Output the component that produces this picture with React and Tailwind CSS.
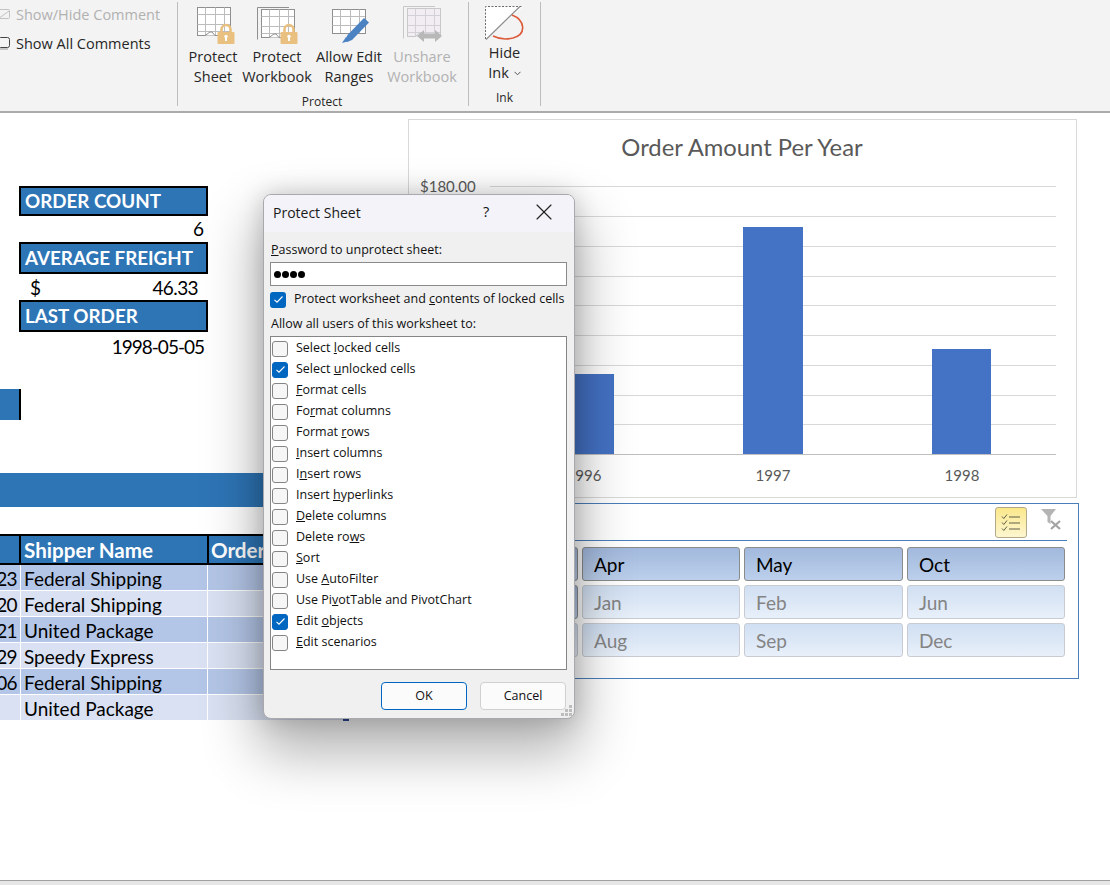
import { X } from 'lucide-react'

const seg = { fontFamily: '"Open Sans", "Noto Sans", sans-serif' }

const options = [
  [['Select ', 'l', 'ocked cells'], false],
  [['Select ', 'u', 'nlocked cells'], true],
  [['', 'F', 'ormat cells'], false],
  [['Fo', 'r', 'mat columns'], false],
  [['Format ', 'r', 'ows'], false],
  [['', 'I', 'nsert columns'], false],
  [['I', 'n', 'sert rows'], false],
  [['Insert ', 'h', 'yperlinks'], false],
  [['', 'D', 'elete columns'], false],
  [['Delete ro', 'w', 's'], false],
  [['', 'S', 'ort'], false],
  [['Use ', 'A', 'utoFilter'], false],
  [['Use Pi', 'v', 'otTable and PivotChart'], false],
  [['Edit ', 'o', 'bjects'], true],
  [['', 'E', 'dit scenarios'], false],
]

const tableRows = [
  ['23', 'Federal Shipping', 'bg-[#b4c6e7]'],
  ['20', 'Federal Shipping', 'bg-[#d9e1f2]'],
  ['21', 'United Package', 'bg-[#b4c6e7]'],
  ['29', 'Speedy Express', 'bg-[#d9e1f2]'],
  ['06', 'Federal Shipping', 'bg-[#b4c6e7]'],
  ['', 'United Package', 'bg-[#d9e1f2]'],
]

const slicerRows = [
  [['', true], ['Apr', true], ['May', true], ['Oct', true]],
  [['', true], ['Jan', false], ['Feb', false], ['Jun', false]],
  [['', false], ['Aug', false], ['Sep', false], ['Dec', false]],
]

const gridY = [186, 216, 246, 276, 305, 335, 365, 395, 424, 454]

function Check({ checked }) {
  return (
    <span
      className={`w-[16px] h-[16px] rounded-[3px] shrink-0 flex items-center justify-center border ${
        checked ? 'bg-[#0067c0] border-[#0067c0]' : 'bg-[#f6f6f6] border-[#858585]'
      }`}
    >
      {checked && (
        <svg width="11" height="9" viewBox="0 0 11 9" fill="none">
          <path d="M1.5 4.8 L4 7.2 L9.5 1.5" stroke="white" strokeWidth="1.1" />
        </svg>
      )}
    </span>
  )
}

function SheetIcon({ x = 0, y = 0, double, faded, short }) {
  const outer = faded ? '#c8c8c8' : '#8f8f8f'
  const inner = faded ? '#d3d0d6' : '#bcbcbc'
  const h = short ? 24 : 28
  return (
    <g transform={`translate(${x} ${y})`} fill="none" strokeWidth="1">
      {double && <path d={`M-3.5 ${h + 2.5} V-1.5 H28`} stroke={outer} />}
      <rect x="0.5" y="0.5" width="33" height={h} fill={faded ? '#f1edf3' : 'white'} stroke={outer} />
      <path d={`M8.5 0.5 V${h} M18.5 0.5 V${h} M27.5 0.5 V${h} M0.5 7.5 H33`} stroke={inner} />
      <path d={short ? 'M0.5 16.5 H33' : 'M0.5 17.5 H33 M0.5 24.5 H33'} stroke={inner} />
      {!short && <path d="M8 28.5 L13 25 H15 L18 28.5" stroke={outer} fill="white" />}
    </g>
  )
}

function Lock({ x = 0, y = 0 }) {
  return (
    <g transform={`translate(${x} ${y})`}>
      <path d="M4.5 10 V6.5 a4.5 4.5 0 0 1 9 0 V10" fill="none" stroke="#e9c07f" strokeWidth="2.6" />
      <rect x="0.5" y="9" width="17" height="12" rx="1" fill="#e9c07f" />
      <rect x="8" y="13" width="2" height="5" fill="white" />
      <circle cx="9" cy="13.5" r="1.7" fill="white" />
    </g>
  )
}

function RibbonButton({ lines, faded, icon, width }) {
  return (
    <div className="flex flex-col items-center shrink-0" style={{ width }}>
      <div className="h-[40px] w-[44px]">{icon}</div>
      <div className={`text-[14.5px] leading-[20px] text-center whitespace-nowrap ${faded ? 'text-[#b1b1b1]' : 'text-[#262626]'}`}>
        {lines.map((l) => (
          <div key={l}>{l}</div>
        ))}
      </div>
    </div>
  )
}

function Ribbon() {
  return (
    <header className="h-[113px] bg-[#f3f3f3] border-b-2 border-[#ababab] flex shrink-0 text-[14.5px]" style={seg}>
      <div className="w-[178px] border-r border-[#bdbdbd] my-[2px] h-[104px] shrink-0 pt-[3px] relative">
        <div className="flex items-center h-[20px] gap-[5px] text-[#b1b1b1] -ml-[3px]">
          <svg width="14" height="14" viewBox="0 0 14 14" fill="none" stroke="#c2c2c2" className="shrink-0 -mt-[3px]">
            <rect x="1.5" y="2.5" width="11" height="9" rx="1" />
            <path d="M1 12 L12 4" />
          </svg>
          <span>Show/Hide Comment</span>
        </div>
        <div className="flex items-center h-[20px] mt-[9px] gap-[5px] text-[#262626] -ml-[3px]">
          <svg width="14" height="14" viewBox="0 0 14 14" fill="none" stroke="#444" className="shrink-0 -mt-[3px]">
            <rect x="1.5" y="1.5" width="11" height="10" rx="2" />
            <path d="M3 13 H11" stroke="#999" />
          </svg>
          <span>Show All Comments</span>
        </div>
      </div>
      <div className="w-[291px] border-r border-[#bdbdbd] my-[2px] h-[104px] shrink-0 flex flex-col">
        <div className="flex pt-[5px] pl-[3px] h-[85px]">
          <RibbonButton
            lines={['Protect', 'Sheet']}
            width={64}
            icon={
              <svg width="44" height="40" viewBox="0 0 44 40" className="overflow-visible">
                <SheetIcon x={6} />
                <Lock x={26} y={16} />
              </svg>
            }
          />
          <RibbonButton
            lines={['Protect', 'Workbook']}
            width={64}
            icon={
              <svg width="44" height="40" viewBox="0 0 44 40" className="overflow-visible">
                <SheetIcon x={6} y={2} double />
                <Lock x={25} y={16} />
              </svg>
            }
          />
          <RibbonButton
            lines={['Allow Edit', 'Ranges']}
            width={80}
            icon={
              <svg width="44" height="40" viewBox="0 0 44 40" className="overflow-visible">
                <SheetIcon x={5} y={2} short />
                <path d="M18 33 L20.5 28 L37 11 L42 15.5 L25 33 L20 35 Z" fill="#4a82c2" />
                <path d="M15 36 L19 30 L22 34 Z" fill="#4a82c2" />
              </svg>
            }
          />
          <RibbonButton
            lines={['Unshare', 'Workbook']}
            faded
            width={66}
            icon={
              <svg width="44" height="40" viewBox="0 0 44 40" className="overflow-visible">
                <SheetIcon x={7} y={1} double faded />
                <path d="M17 29 L24 23 V26.5 H35 V23 L42 29 L35 35 V31.5 H24 V35 Z" fill="#b8b8b8" />
              </svg>
            }
          />
        </div>
        <div className="text-[12px] leading-[16px] text-[#262626] mt-[7px] text-center pr-[2px]">Protect</div>
      </div>
      <div className="w-[72px] border-r border-[#bdbdbd] my-[2px] h-[104px] shrink-0 flex flex-col items-center">
        <div className="flex flex-col items-center h-[85px] pt-[4px]">
          <svg width="40" height="37" viewBox="0 0 40 37" fill="none" className="shrink-0">
            <path d="M0.5 33.5 V0.5 H38 Z" fill="white" />
            <path d="M0.5 33 V0.5 H38" stroke="#6b6b6b" strokeDasharray="2 1.5" />
            <path d="M1 33.5 L35 0.5" stroke="#8d8d8d" strokeWidth="1.2" />
            <path d="M27 9 C40 14 42 28 28 32 C20 34 14 33 8 30" stroke="#dd5b3a" strokeWidth="1.6" />
          </svg>
          <div className="text-[14.5px] leading-[20px] text-center text-[#262626] mt-[0px]">Hide</div>
          <div className="text-[14.5px] leading-[20px] text-center text-[#262626] flex items-center gap-[5px]">
            Ink
            <svg width="7" height="5" viewBox="0 0 7 5" fill="none" stroke="#555">
              <path d="M0.5 0.8 L3.5 3.8 L6.5 0.8" />
            </svg>
          </div>
        </div>
        <div className="text-[12px] leading-[16px] text-[#262626] mt-[7px]">Ink</div>
      </div>
    </header>
  )
}

function SummaryBox({ children }) {
  return (
    <div className="ml-[19px] w-[189px] border-2 border-black bg-[#2e75b6] text-white font-bold text-[18.8px] pl-[4px] flex items-center h-full">
      {children}
    </div>
  )
}

function LeftSheet() {
  return (
    <div className="w-[349px] shrink-0 text-[19px] text-black" style={{ fontFamily: 'Lato, sans-serif' }}>
      <div className="h-[73px]" />
      <div className="h-[30px]">
        <SummaryBox>ORDER COUNT</SummaryBox>
      </div>
      <div className="h-[26px] w-[204px] text-right leading-[26px]">6</div>
      <div className="h-[32px]">
        <SummaryBox>AVERAGE FREIGHT</SummaryBox>
      </div>
      <div className="h-[26px] w-[198px] flex justify-between pl-[30px] leading-[28px]">
        <span>$</span>
        <span className="tracking-[-0.6px]">46.33</span>
      </div>
      <div className="h-[32px]">
        <SummaryBox>LAST ORDER</SummaryBox>
      </div>
      <div className="h-[30px] w-[204px] text-right leading-[30px] tracking-[-1px]">1998-05-05</div>
      <div className="h-[27px]" />
      <div className="h-[31px] w-[21px] bg-[#2e75b6] border-r-2 border-black" />
      <div className="h-[53px]" />
      <div className="h-[34px] bg-[#2e75b6]" />
      <div className="h-[27px]" />
      <div className="h-[31px] flex bg-[#2e75b6] border-y-2 border-black text-white font-bold text-[20.6px]">
        <div className="w-[21px] border-r-2 border-black shrink-0" />
        <div className="w-[188px] border-r-2 border-black pl-[3px] leading-[29px] shrink-0">Shipper Name</div>
        <div className="pl-[2px] leading-[29px]">Order</div>
      </div>
      {tableRows.map(([id, name, bg], i) => (
        <div key={i} className={`h-[26px] flex ${bg} border-b border-white relative`}>
          <div className="w-[21px] border-r border-white shrink-0 flex justify-end pr-[3px] leading-[28px] overflow-hidden whitespace-nowrap tracking-[-0.6px]">
            {id}
          </div>
          <div className="w-[187px] border-r border-white pl-[3px] leading-[28px] shrink-0">{name}</div>
          {i === 5 && <div className="absolute right-0 -bottom-px w-[6px] h-[3px] bg-[#2f4a9a]" />}
        </div>
      ))}
    </div>
  )
}

function Chart() {
  return (
    <div className="w-[669px] h-[379px] border border-[#d9d9d9] bg-white shrink-0">
      <svg width="667" height="377" viewBox="409 120 667 377" style={{ fontFamily: 'Lato, sans-serif' }}>
        <text x="742" y="156" textAnchor="middle" fontSize="23.8" fill="#595959">
          Order Amount Per Year
        </text>
        <text x="420" y="192" fontSize="15" fill="#595959">
          $180.00
        </text>
        {gridY.map((y) => (
          <line key={y} x1="490" x2="1056" y1={y + 0.5} y2={y + 0.5} stroke={y === 454 ? '#bfbfbf' : '#d9d9d9'} />
        ))}
        <rect x="555" y="374" width="59" height="80" fill="#4472c4" />
        <rect x="743" y="227" width="60" height="227" fill="#4472c4" />
        <rect x="932" y="349" width="59" height="105" fill="#4472c4" />
        <text x="584" y="481" textAnchor="middle" fontSize="15" fill="#595959">
          1996
        </text>
        <text x="773" y="481" textAnchor="middle" fontSize="15" fill="#595959">
          1997
        </text>
        <text x="962" y="481" textAnchor="middle" fontSize="15" fill="#595959">
          1998
        </text>
      </svg>
    </div>
  )
}

function Slicer() {
  return (
    <div className="w-[671px] h-[176px] mt-[5px] border border-[#4a7ebb] bg-white shrink-0 px-[11px]" style={{ fontFamily: 'Lato, sans-serif' }}>
      <div className="h-[37px] border-b border-[#4a7ebb] flex items-start justify-end pt-[3px] gap-[14px] pr-[6px]">
        <div className="w-[32px] h-[31px] rounded-[3px] border border-[#b1a98a] bg-gradient-to-b from-[#fbe88a] to-[#fdf6d0] flex items-center justify-center">
          <svg width="20" height="20" viewBox="0 0 20 20" fill="none" stroke="#5e5e48" strokeWidth="1">
            <path d="M1 3.5 L2.8 5.5 L6 1.5 M1 9.5 L2.8 11.5 L6 7.5 M1 15.5 L2.8 17.5 L6 13.5" />
            <path d="M8 4 H19 M8 10 H19 M8 16 H19" />
          </svg>
        </div>
        <svg width="20" height="21" viewBox="0 0 20 21" className="mt-[2px]">
          <path d="M0 0 H15 L9.5 7 V15 L6.5 13 V7 Z" fill="#b4b4b4" />
          <path d="M10 12 L19 20 M19 12 L10 20" stroke="#a3a3a3" strokeWidth="2.2" />
        </svg>
      </div>
      <div className="flex flex-col gap-[4px] mt-[6px]">
        {slicerRows.map((row, r) => (
          <div key={r} className="grid grid-cols-[158px_158px_159px_158px] gap-[4px]">
            {row.map(([label, on], c) => (
              <div
                key={c}
                className={`h-[34px] rounded-[3px] border pl-[11px] text-[19px] leading-[33px] bg-gradient-to-b ${
                  on
                    ? 'border-[#8b8b8b] from-[#a2b9dd] to-[#bcd0ec] text-black'
                    : 'border-[#c8ccd2] from-[#d0dff2] to-[#e8f0fa] text-[#848484]'
                }`}
              >
                {label}
              </div>
            ))}
          </div>
        ))}
      </div>
    </div>
  )
}

function ProtectDialog() {
  return (
    <div
      className="absolute left-[263px] top-[194px] w-[312px] h-[525px] rounded-[8px] border border-[#a9a9ad] bg-[#f0f0f0] shadow-[0_28px_55px_6px_rgba(0,0,0,0.3),0_0_24px_rgba(0,0,0,0.18)] text-[12.5px] text-[#111] flex flex-col overflow-hidden"
      style={seg}
    >
      <div className="h-[37px] bg-[#f3f3f9] flex items-center pl-[9px] pb-[2px] shrink-0 relative">
        <span className="text-[14px] text-[#1a1a1a]">Protect Sheet</span>
        <span className="absolute left-[219px] top-[6px] text-[14.5px]">?</span>
        <X size={28} strokeWidth={1} className="absolute left-[266px] top-[3px] text-[#222]" />
      </div>
      <div className="px-[6px] flex flex-col grow">
        <div className="h-[24px] leading-[24px] pl-[1px] mt-[6px]">
          <u>P</u>assword to unprotect sheet:
        </div>
        <div className="h-[24px] border border-[#8a8a8a] bg-white flex items-center pl-[3px] gap-[1px] shrink-0 mr-[1px]">
          {[0, 1, 2, 3].map((d) => (
            <span key={d} className="w-[7px] h-[7px] rounded-full bg-black" />
          ))}
        </div>
        <div className="flex items-center h-[17px] gap-[8px] mt-[5px]">
          <span className="w-[16px] h-[16px] rounded-[3px] bg-[#0067c0] flex items-center justify-center shrink-0">
            <svg width="11" height="9" viewBox="0 0 11 9" fill="none">
              <path d="M1.5 4.8 L4 7.2 L9.5 1.5" stroke="white" strokeWidth="1.1" />
            </svg>
          </span>
          <span className="whitespace-nowrap">
            Protect worksheet and <u>c</u>ontents of locked cells
          </span>
        </div>
        <div className="h-[20px] leading-[20px] mt-[6px] pl-[1px]">Allow all users of this worksheet to:</div>
        <div className="h-[334px] border border-[#858585] bg-white mt-[2px] mr-[1px] pt-[1px] pl-[1px] shrink-0">
          {options.map(([[a, b, c], on]) => (
            <div key={a + b + c} className="h-[21px] flex items-center gap-[8px]">
              <Check checked={on} />
              <span className="whitespace-nowrap">
                {a}
                <u>{b}</u>
                {c}
              </span>
            </div>
          ))}
        </div>
        <div className="flex justify-end gap-[13px] mt-[12px] pr-[2px]">
          <button className="w-[86px] h-[28px] rounded-[4px] border border-[#0067c0] bg-[#fbfbfb] text-[12.5px]">OK</button>
          <button className="w-[86px] h-[28px] rounded-[4px] border border-[#d0d0d0] bg-[#fbfbfb] text-[12.5px]">Cancel</button>
        </div>
      </div>
      <svg width="12" height="12" viewBox="0 0 12 12" className="absolute right-[1px] bottom-[1px]" fill="#bdbdbd">
        <rect x="8" y="0" width="3" height="3" />
        <rect x="4" y="4" width="3" height="3" />
        <rect x="8" y="4" width="3" height="3" />
        <rect x="0" y="8" width="3" height="3" />
        <rect x="4" y="8" width="3" height="3" />
        <rect x="8" y="8" width="3" height="3" />
      </svg>
    </div>
  )
}

export default function App() {
  return (
    <div className="w-[1110px] h-[885px] bg-white relative overflow-hidden flex flex-col">
      <Ribbon />
      <main className="flex grow min-h-0">
        <LeftSheet />
        <div className="ml-[59px] pt-[6px] flex flex-col">
          <Chart />
          <Slicer />
        </div>
      </main>
      <div className="h-[5px] bg-[#e6e6e6] border-t border-[#a0a0a0] shrink-0" />
      <ProtectDialog />
    </div>
  )
}
